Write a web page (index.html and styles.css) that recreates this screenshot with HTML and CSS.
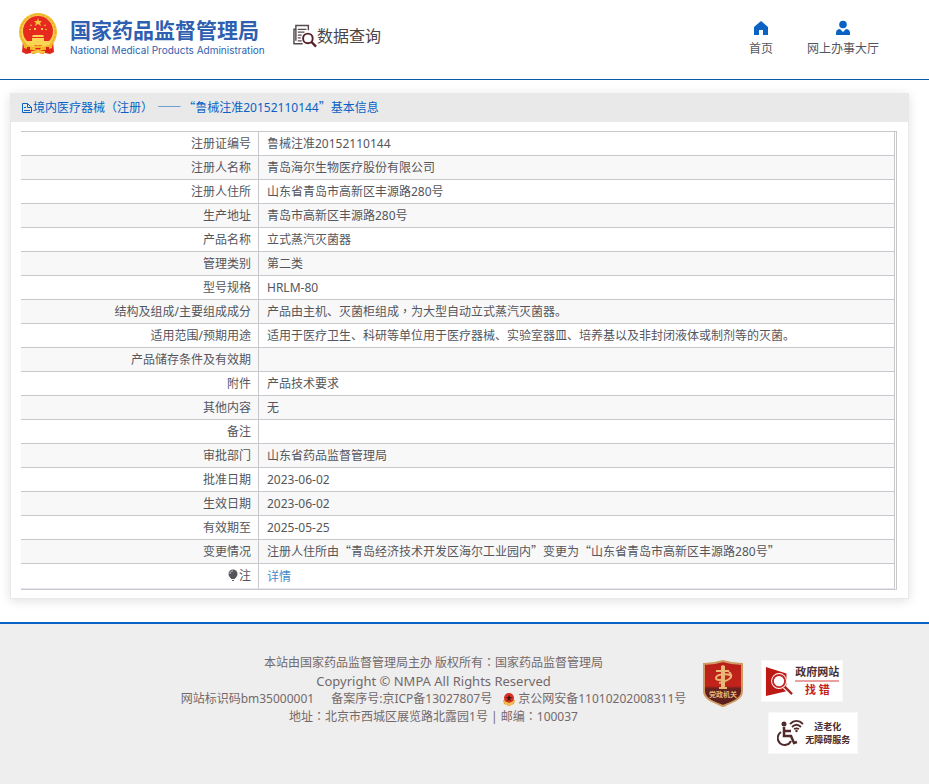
FILE: index.html
```html
<!DOCTYPE html>
<html lang="zh-CN">
<head>
<meta charset="utf-8">
<meta name="viewport" content="width=device-width, initial-scale=1">
<title>国家药品监督管理局 数据查询</title>
<link rel="stylesheet" href="styles.css">
</head>
<body>
<header class="site-header">
  <a class="brand" href="#">
    <svg class="emblem" viewBox="0 0 40 42" aria-hidden="true">
      <path d="M5 28 4 39l4 2 5-1 3 1 4-2 4 2 3-1 5 1 4-2-1-11z" fill="#e1261c"/>
      <circle cx="20" cy="19" r="19" fill="#f3bd2f"/>
      <circle cx="20" cy="19" r="17" fill="#f9d04a" stroke="#e5a024" stroke-dasharray="2 2"/>
      <circle cx="20" cy="18" r="15" fill="#e62a20"/>
      <path d="m20 5 1 3h3l-2 2 1 3-3-2-3 2 1-3-2-2h3z" fill="#f5c73c"/>
      <path d="m13 11 1 2h-2zM27 11l1 2h-2zM11 16h2v1h-2zM16 15h2v2h-2zM23 15h2v2h-2zM27 16h2v1h-2z" fill="#f5c73c"/>
      <path d="M15 22h10l1 2H14zM14 25h12v3h6v4H8v-4h6z" fill="#fbd655"/>
      <path d="M5 29c5 4 9 5 11 5l4-2 4 2c3 0 7-1 11-5l-1 6-7 2-3-2-4 2-4-2-4 2-6-2z" fill="#f3b629"/>
      <path d="M9 34h3v6H9zM28 34h3v6h-3zM17 35h6l-3 3z" fill="#d91f18"/>
      <path d="M13 38h4l3-2 3 2h4v2l-4 1-3-2-3 2-4-1z" fill="#f6c339"/>
    </svg>
    <span class="brand-text">
      <span class="brand-cn">国家药品监督管理局</span>
      <span class="brand-en">National Medical Products Administration</span>
    </span>
  </a>
  <a class="section-name" href="#">
    <svg class="section-icon" viewBox="0 0 25 24" aria-hidden="true">
      <path d="M16 6V1H3v4H1v15h9M3 5v12" fill="none" stroke="#554b4e" stroke-width="1.5"/>
      <path d="M5 5h9M5 8h7M5 11h4M5 14h3M5 17h4" stroke="#554b4e" stroke-width="1.3"/>
      <circle cx="15.500" cy="14.500" r="5" fill="#fff" stroke="#552228" stroke-width="2"/>
      <path d="m19 18 5 5" stroke="#552228" stroke-width="2.500"/>
    </svg>
    <span>数据查询</span>
  </a>
  <nav class="top-nav">
    <a href="#">
      <svg viewBox="0 0 16 16" aria-hidden="true"><path d="M8 1 1 7v8h5v-5h4v5h5V7z" fill="#0a62c4"/></svg>
      <span>首页</span>
    </a>
    <a href="#">
      <svg viewBox="0 0 16 16" aria-hidden="true"><circle cx="8" cy="4.500" r="3.800" fill="#0a62c4"/><path d="M1 15v-2c0-3 2-4 4-4l3 3 3-3c2 0 4 1 4 4v2z" fill="#0a62c4"/></svg>
      <span>网上办事大厅</span>
    </a>
  </nav>
</header>

<main class="card">
  <h1 class="card-title">
    <svg viewBox="0 0 12 12" aria-hidden="true"><path d="M1.500 1.500h5l4 4v5h-9zM6.500 1.500v4h4M3 5.500h2M3 8.500h6" fill="none" stroke="#0a62c4"/></svg>
    <span>境内医疗器械<span class="mid" lang="zh-TW">（</span>注册<span class="mid" lang="zh-TW">）</span> <span class="wide dash">——</span><span class="wide">“</span>鲁械注准20152110144<span class="wide">”</span>基本信息</span>
  </h1>
  <div class="table-frame">
    <table class="details">
      <tbody>
        <tr><th scope="row">注册证编号</th><td>鲁械注准20152110144</td></tr>
        <tr><th scope="row">注册人名称</th><td>青岛海尔生物医疗股份有限公司</td></tr>
        <tr><th scope="row">注册人住所</th><td>山东省青岛市高新区丰源路280号</td></tr>
        <tr><th scope="row">生产地址</th><td>青岛市高新区丰源路280号</td></tr>
        <tr><th scope="row">产品名称</th><td>立式蒸汽灭菌器</td></tr>
        <tr><th scope="row">管理类别</th><td>第二类</td></tr>
        <tr><th scope="row">型号规格</th><td>HRLM-80</td></tr>
        <tr><th scope="row">结构及组成/主要组成成分</th><td>产品由主机、灭菌柜组成<span class="mid" lang="zh-TW">，</span>为大型自动立式蒸汽灭菌器。</td></tr>
        <tr><th scope="row">适用范围/预期用途</th><td>适用于医疗卫生、科研等单位用于医疗器械、实验室器皿、培养基以及非封闭液体或制剂等的灭菌。</td></tr>
        <tr><th scope="row">产品储存条件及有效期</th><td></td></tr>
        <tr><th scope="row">附件</th><td>产品技术要求</td></tr>
        <tr><th scope="row">其他内容</th><td>无</td></tr>
        <tr><th scope="row">备注</th><td></td></tr>
        <tr><th scope="row">审批部门</th><td>山东省药品监督管理局</td></tr>
        <tr><th scope="row">批准日期</th><td>2023-06-02</td></tr>
        <tr><th scope="row">生效日期</th><td>2023-06-02</td></tr>
        <tr><th scope="row">有效期至</th><td>2025-05-25</td></tr>
        <tr><th scope="row">变更情况</th><td>注册人住所由<span class="wide">“</span>青岛经济技术开发区海尔工业园内<span class="wide">”</span>变更为<span class="wide">“</span>山东省青岛市高新区丰源路280号<span class="wide">”</span></td></tr>
        <tr class="note"><th scope="row"><svg viewBox="0 0 10 12" aria-hidden="true"><circle cx="5" cy="5" r="4.500" fill="#55565c"/><path d="M3 8h4v2H3zM4 11h2v1H4z" fill="#55565c"/><path d="M2 5c0-2 1-3 3-3" fill="none" stroke="#c8c8c8"/></svg>注</th><td><a href="#">详情</a></td></tr>
      </tbody>
    </table>
  </div>
</main>

<footer class="site-footer">
  <div class="legal">
    <p>本站由国家药品监督管理局主办 版权所有<span class="mid" lang="zh-TW">：</span>国家药品监督管理局</p>
    <p class="copyright">Copyright © NMPA All Rights Reserved</p>
    <p class="records">
      <span>网站标识码bm35000001</span>
      <span>备案序号:京ICP备13027807号</span>
      <span class="police"><svg viewBox="0 0 12 13" aria-hidden="true"><path d="M0 7h12l-1 4-5 2-5-2z" fill="#e8a93c"/><circle cx="6" cy="5" r="5" fill="#d7301f"/><path d="m6 2 1 2h2L7 6l1 2-2-1-2 1 1-2-2-2h2z" fill="#451713"/><path d="m1 8 5 2 5-2-2 4H3z" fill="#f2bd55"/></svg>京公网安备11010202008311号</span>
    </p>
    <p>地址<span class="mid" lang="zh-TW">：</span>北京市西城区展览路北露园1号 | 邮编<span class="mid" lang="zh-TW">：</span>100037</p>
  </div>
  <div class="badges">
    <a class="shield" href="#" aria-label="党政机关">
      <svg viewBox="0 0 40 47" aria-hidden="true">
        <defs>
          <linearGradient id="shield-fill" x1="0" y1="0" x2="0" y2="1">
            <stop offset="0" stop-color="#b81f18"/><stop offset=".55" stop-color="#c3231b"/><stop offset=".62" stop-color="#64201c"/><stop offset="1" stop-color="#5a1f1e"/>
          </linearGradient>
        </defs>
        <path d="M1 4c7 0 13-1 19-3 6 2 12 3 19 3v27c0 8-9 11-19 15C10 42 1 39 1 31z" fill="url(#shield-fill)" stroke="#cf9a63" stroke-width="2"/>
        <path d="M18 6l2-1 2 1v4h4v2h-4v15h2v2h-8v-2h2V12h-5v-2h5z" fill="#e9b877"/>
        <path d="M26 12c6 5-1 9-10 11M29 16c-4-3-16-2-16 2 0 3 6 2 9 1" fill="none" stroke="#e9b877" stroke-width="2"/>
        <text class="shield-text" x="20" y="37" text-anchor="middle">党政机关</text>
      </svg>
    </a>
    <a class="badge report" href="#">
      <svg viewBox="0 0 30 33" aria-hidden="true">
        <path d="m1 1 22 7v19L1 32z" fill="#bd1a16"/>
        <circle cx="15" cy="16" r="8.500" fill="#fff"/>
        <circle cx="15" cy="16" r="6.500" fill="#fff" stroke="#c32822" stroke-width="2"/>
        <path d="m21 22 8 8" stroke="#fff" stroke-width="5"/>
        <path d="m21 22 8 8" stroke="#a32420" stroke-width="2.500"/>
      </svg>
      <span class="report-text"><span class="report-top">政府网站</span><span class="report-bottom">找 错</span></span>
    </a>
    <a class="badge access" href="#">
      <svg viewBox="0 0 28 28" aria-hidden="true">
        <circle cx="7" cy="5" r="2.500" fill="#512b2b"/>
        <path d="M7 8v9h7l3 7 3-1M7 12h7" fill="none" stroke="#512b2b" stroke-width="2.500"/>
        <path d="M4 13a7 7 0 1 0 10 9" fill="none" stroke="#512b2b" stroke-width="2"/>
        <path d="M13 5c4-4 9-4 13 0M15 8c3-3 6-3 9 0M17 10c2-1 3-1 5 0" fill="none" stroke="#512b2b" stroke-width="1.800"/>
        <circle cx="19.500" cy="12" r="1.200" fill="#512b2b"/>
      </svg>
      <span class="access-text"><span>适老化</span><span>无障碍服务</span></span>
    </a>
  </div>
</footer>
</body>
</html>
```
FILE: styles.css
```css
* {
  box-sizing: border-box;
}

body {
  margin: 0;
  background: #fff;
  color: #55565c;
  font: 12px/18px "Noto Sans", "Noto Sans CJK SC", sans-serif;
}

a {
  color: inherit;
  text-decoration: none;
}

svg {
  display: block;
  flex: none;
}

p {
  margin: 0;
}

.wide {
  font-family: "Noto Sans CJK SC", sans-serif;
  line-height: 1;
}

.dash {
  padding: 0 2px 0 1px;
}

/* Punctuation centred in its full-width cell */
.mid {
  font-family: "Noto Sans CJK TC", sans-serif;
  line-height: 1;
}

/* Header */
.site-header {
  display: flex;
  align-items: flex-start;
  height: 80px;
  padding: 0 50px 0 18px;
  border-bottom: 1px solid #0a5aa8;
}

.brand {
  display: flex;
  gap: 12px;
  padding-top: 13px;
  color: #2f5fb0;
}

.emblem {
  width: 40px;
  height: 42px;
}

.brand-text {
  display: flex;
  flex-direction: column;
  width: 191px;
  padding-top: 4px;
  white-space: nowrap;
}

.brand-cn {
  font-size: 21px;
  line-height: 26px;
  font-weight: 700;
}

.brand-en {
  font: 400 10px/14px Inter, "Liberation Sans", sans-serif;
}

.section-name {
  display: flex;
  align-items: center;
  margin-left: 32px;
  padding-top: 24px;
  color: #4c4548;
  font-size: 16px;
  line-height: 24px;
}

.section-icon {
  width: 24px;
  height: 24px;
}

.top-nav {
  display: flex;
  gap: 34px;
  margin-left: auto;
  padding-top: 20px;
}

.top-nav a {
  display: flex;
  flex-direction: column;
  align-items: center;
  gap: 4px;
}

.top-nav svg {
  width: 16px;
  height: 16px;
}

/* Record card */
.card {
  margin: 13px 20px 23px 10px;
  padding-bottom: 8px;
  border: 1px solid #e9e9e9;
  border-top: 0;
  box-shadow: 0 2px 10px rgba(0, 0, 0, 0.12);
}

.card-title {
  display: flex;
  align-items: center;
  height: 29px;
  margin: 0;
  padding-left: 10px;
  background: #e9e9e9;
  color: #0a62c4;
  font-size: 12px;
  font-weight: 400;
}

.card-title svg {
  width: 12px;
  height: 12px;
}

.table-frame {
  margin: 9px 11px 0 10px;
  padding-right: 1px;
  border: solid #c8c8cc;
  border-width: 1px 1px 1px 0;
}

.details {
  width: 100%;
  border-spacing: 0;
}

.details th,
.details td {
  height: 24px;
  padding: 0 7px;
  border-right: 1px solid #c8c8cc;
  border-bottom: 1px solid #c8c8cc;
  line-height: 22px;
}

.details th {
  width: 238px;
  font-weight: 400;
  text-align: right;
}

.details td {
  padding-left: 8px;
}

.details tr:nth-child(even) {
  background: #f8f8f8;
}

.details .note th,
.details .note td {
  height: 25px;
  border-bottom-color: #e6e6f2;
}

.details .note td {
  padding-top: 2px;
}

.details svg {
  display: inline-block;
  width: 10px;
  height: 12px;
  margin-right: 1px;
  vertical-align: -1px;
}

.details a {
  color: #428bca;
}

/* Footer */
.site-footer {
  display: flex;
  justify-content: center;
  gap: 17px;
  min-height: 162px;
  padding: 30px 0 24px 110px;
  border-top: 2px solid #0a62c4;
  background: #eee;
  color: #74696a;
}

.legal {
  flex: none;
  text-align: center;
}

.copyright {
  font-size: 13px;
}

.records {
  display: flex;
  justify-content: center;
}

.records span + span {
  margin-left: 17px;
}

.records .police {
  display: flex;
  align-items: center;
  gap: 3px;
  margin-left: 11px;
}

.police svg {
  width: 12px;
  height: 13px;
}

.badges {
  display: grid;
  grid-template-columns: 40px 97px;
  grid-template-rows: 42px 42px;
  gap: 10px 18px;
  align-content: start;
  padding-top: 6px;
}

.shield svg {
  width: 40px;
  height: 47px;
}

.shield-text {
  fill: #e9b877;
  font: 700 7px "Noto Sans CJK SC", sans-serif;
}

.badge {
  display: flex;
  align-items: center;
  border: 1px solid #f8f8f8;
  background: #fff;
  font-weight: 700;
  white-space: nowrap;
}

.report {
  width: 82px;
  padding-left: 3px;
  gap: 2px;
  color: #4c2d2d;
}

.report svg {
  width: 28px;
  height: 33px;
}

.report-text,
.access-text {
  display: flex;
  flex-direction: column;
  align-items: center;
}

.report-top {
  border-bottom: 2px solid #e9a0a0;
  font-size: 11px;
  line-height: 16px;
}

.report-bottom {
  color: #c3231b;
  font-size: 11px;
  line-height: 16px;
}

.access {
  grid-column: 2;
  justify-self: end;
  width: 90px;
  padding-left: 8px;
  color: #4c2d2d;
  font-size: 9px;
  line-height: 13px;
}

.access svg {
  width: 28px;
  height: 28px;
}
```
